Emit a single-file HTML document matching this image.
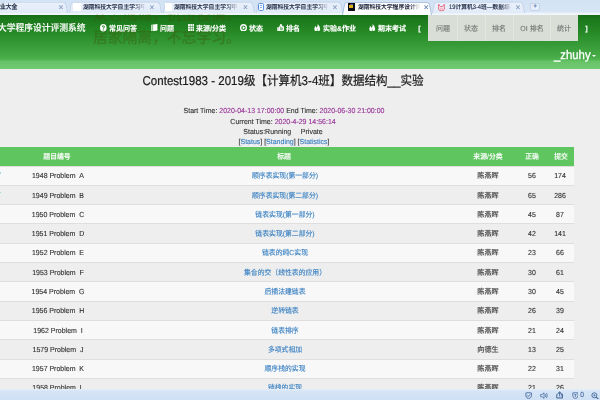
<!DOCTYPE html>
<html lang="zh-CN"><head><meta charset="utf-8"><title>Contest1983</title>
<style>
html,body{margin:0;padding:0;background:#eee;}
body{width:600px;height:400px;overflow:hidden;position:relative;font-family:"Liberation Sans","Noto Sans CJK SC",sans-serif;}
#p{position:absolute;left:0;top:0;width:600px;height:400px;overflow:hidden;filter:blur(0.35px);}
.t{position:absolute;white-space:nowrap;margin:0;padding:0;text-rendering:geometricPrecision;-webkit-text-stroke:0.12px currentColor;}
.r{position:absolute;margin:0;padding:0;}
</style></head><body><div id="p">
<div class="r" style="left:0px;top:0px;width:600px;height:14.8px;background:linear-gradient(#d3e2f4 0,#d7e5f5 78%,#edf3fb 88%,#f2f6fc 100%);"></div>
<div class="r" style="left:-20px;top:1px;width:87.5px;height:11.6px;background:linear-gradient(#e9f0fa,#e1ebf8);border:0.6px solid #c3d4ea;border-bottom:none;border-radius:3px 3px 0 0;transform:perspective(40px) rotateX(10deg);transform-origin:50% 100%;box-sizing:border-box"></div>
<div class="r" style="left:68.5px;top:1px;width:93.0px;height:11.6px;background:linear-gradient(#e9f0fa,#e1ebf8);border:0.6px solid #c3d4ea;border-bottom:none;border-radius:3px 3px 0 0;transform:perspective(40px) rotateX(10deg);transform-origin:50% 100%;box-sizing:border-box"></div>
<div class="r" style="left:162.5px;top:1px;width:92.0px;height:11.6px;background:linear-gradient(#e9f0fa,#e1ebf8);border:0.6px solid #c3d4ea;border-bottom:none;border-radius:3px 3px 0 0;transform:perspective(40px) rotateX(10deg);transform-origin:50% 100%;box-sizing:border-box"></div>
<div class="r" style="left:255.5px;top:1px;width:86.5px;height:11.6px;background:linear-gradient(#e9f0fa,#e1ebf8);border:0.6px solid #c3d4ea;border-bottom:none;border-radius:3px 3px 0 0;transform:perspective(40px) rotateX(10deg);transform-origin:50% 100%;box-sizing:border-box"></div>
<div class="r" style="left:432px;top:1px;width:93px;height:11.6px;background:linear-gradient(#e9f0fa,#e1ebf8);border:0.6px solid #c3d4ea;border-bottom:none;border-radius:3px 3px 0 0;transform:perspective(40px) rotateX(10deg);transform-origin:50% 100%;box-sizing:border-box"></div>
<div class="r" style="left:342px;top:0.6px;width:90px;height:14px;background:#fff;border:0.6px solid #a9c0de;border-bottom:none;border-radius:3px 3px 0 0;transform:perspective(40px) rotateX(10deg);transform-origin:50% 100%;box-sizing:border-box"></div>
<div class="r" style="left:530px;top:2.6px;width:10.4px;height:8.4px;background:#e6eefa;border:0.6px solid #c2d3ea;border-radius:2px;box-sizing:border-box"></div>
<div class="t" style="transform:translateX(-50%) scaleX(1);transform-origin:50% 50%;left:535.2px;top:3px;font-size:6.5px;line-height:7px;color:#5f7fb0;font-weight:bold;">+</div>
<div class="t" style="transform:scaleX(0.875);transform-origin:0 50%;left:-0.5px;top:4px;font-size:6.6px;line-height:7px;color:#1c2540;font-weight:500;">业大全</div>
<div class="t" style="transform:translateX(-50%) scaleX(1);transform-origin:50% 50%;left:61px;top:2px;font-size:8.4px;line-height:10px;color:#7f98bd;">×</div>
<div class="t" style="transform:translateX(-50%) scaleX(1);transform-origin:50% 50%;left:152px;top:2px;font-size:8.4px;line-height:10px;color:#7f98bd;">×</div>
<div class="t" style="transform:translateX(-50%) scaleX(1);transform-origin:50% 50%;left:245.5px;top:2px;font-size:8.4px;line-height:10px;color:#7f98bd;">×</div>
<div class="t" style="transform:translateX(-50%) scaleX(1);transform-origin:50% 50%;left:335px;top:2px;font-size:8.4px;line-height:10px;color:#7f98bd;">×</div>
<div class="t" style="transform:translateX(-50%) scaleX(1);transform-origin:50% 50%;left:518px;top:2px;font-size:8.4px;line-height:10px;color:#7f98bd;">×</div>
<div class="t" style="transform:translateX(-50%) scaleX(1);transform-origin:50% 50%;left:426.3px;top:2px;font-size:8.4px;line-height:10px;color:#5b7db3;">×</div>
<div class="r" style="left:73px;top:3px;width:8px;height:8px;background:#fff;"></div>
<div class="r" style="left:165px;top:3px;width:7.2px;height:8px;background:#fff;"></div>
<div class="r" style="left:257.8px;top:2.8px;width:6.4px;height:8.4px;border:1px solid #5b8fe0;border-radius:1.6px;background:#f3f7ff;box-sizing:border-box"></div>
<div class="r" style="left:259.6px;top:5.2px;width:2.8px;height:0.8px;background:#8db0ea;"></div>
<div class="r" style="left:259.6px;top:7px;width:2.8px;height:0.8px;background:#8db0ea;"></div>
<div class="r" style="left:347.5px;top:3px;width:7.2px;height:7.6px;background:#0c0c14;"></div>
<div class="r" style="left:349px;top:5.4px;width:4.2px;height:2.6px;background:#d8b020;"></div>
<div class="r" style="left:349.6px;top:4.4px;width:1.2px;height:1px;background:#c03030;"></div>
<div class="r" style="left:351.4px;top:4.4px;width:1.2px;height:1px;background:#3070d0;"></div>
<svg class="r" style="left:437.3px;top:2.6px" width="9" height="9" viewBox="0 0 18 18"><path d="M3.4 2.4 L6.4 7 L11.6 7 L14.6 2.4 L14.8 12 Q14.8 15.6 9 15.6 Q3.2 15.6 3.2 12 Z" fill="#fde8ec" stroke="#e4607a" stroke-width="1.7" stroke-linejoin="round"/><path d="M5.6 13.6 L9 10.4 L12.4 13.6" fill="none" stroke="#e4607a" stroke-width="1.4"/></svg>
<div class="t" style="transform:scaleX(0.875);transform-origin:0 50%;left:83px;top:4px;font-size:6.6px;line-height:7px;color:#1c2540;font-weight:500;width:72px;overflow:hidden;-webkit-mask-image:linear-gradient(90deg,#000 82%,transparent 99%);">湖南科技大学自主学习中心</div>
<div class="t" style="transform:scaleX(0.875);transform-origin:0 50%;left:174px;top:4px;font-size:6.6px;line-height:7px;color:#1c2540;font-weight:500;width:74px;overflow:hidden;-webkit-mask-image:linear-gradient(90deg,#000 82%,transparent 99%);">湖南科技大学自主学习中心</div>
<div class="t" style="transform:scaleX(0.875);transform-origin:0 50%;left:266px;top:4px;font-size:6.6px;line-height:7px;color:#1c2540;font-weight:500;width:72px;overflow:hidden;-webkit-mask-image:linear-gradient(90deg,#000 82%,transparent 99%);">湖南科技大学自主学习中心</div>
<div class="t" style="transform:scaleX(0.875);transform-origin:0 50%;left:357.5px;top:4px;font-size:6.6px;line-height:7px;color:#101830;font-weight:500;width:72px;overflow:hidden;-webkit-mask-image:linear-gradient(90deg,#000 82%,transparent 99%);">湖南科技大学程序设计评测</div>
<div class="t" style="transform:scaleX(0.875);transform-origin:0 50%;left:449px;top:4px;font-size:6.6px;line-height:7px;color:#1c2540;font-weight:500;width:72px;overflow:hidden;-webkit-mask-image:linear-gradient(90deg,#000 82%,transparent 99%);">19计算机3-4班—数据结构__</div>
<div class="r" style="left:0px;top:14.6px;width:600px;height:54.6px;background:linear-gradient(#176c17 0%,#1b761b 6%,#258825 30%,#369b36 55%,#4aae4a 80%,#52b552 83%,#66c266 85.5%,#6cc66c 92%,#72ca72 100%);"></div>
<div class="t" style="transform:scaleX(0.935);transform-origin:0 50%;left:93px;top:7px;font-size:15.8px;line-height:17px;color:rgb(60,88,8);font-weight:500;opacity:0.42;clip-path:inset(7.6px 0 0 0);">众志成城，抗击疫情。</div>
<div class="t" style="transform:scaleX(0.935);transform-origin:0 50%;left:93px;top:30px;font-size:15.8px;line-height:17px;color:rgb(60,88,8);font-weight:500;opacity:0.42;">居家隔离，不忘学习。</div>
<div class="t" style="transform:scaleX(0.921);transform-origin:0 50%;left:-2.1px;top:23px;font-size:9.5px;line-height:11px;color:#fff;font-weight:500;">大学程序设计评测系统</div>
<div class="t" style="transform:scaleX(0.958);transform-origin:0 50%;left:109px;top:24px;font-size:7.3px;line-height:9px;color:#fff;font-weight:bold;">常见问答</div>
<div class="t" style="transform:scaleX(0.958);transform-origin:0 50%;left:160px;top:24px;font-size:7.3px;line-height:9px;color:#fff;font-weight:bold;">问题</div>
<div class="t" style="transform:scaleX(0.958);transform-origin:0 50%;left:196px;top:24px;font-size:7.3px;line-height:9px;color:#fff;font-weight:bold;">来源/分类</div>
<div class="t" style="transform:scaleX(0.958);transform-origin:0 50%;left:249px;top:24px;font-size:7.3px;line-height:9px;color:#fff;font-weight:bold;">状态</div>
<div class="t" style="transform:scaleX(0.958);transform-origin:0 50%;left:285.7px;top:24px;font-size:7.3px;line-height:9px;color:#fff;font-weight:bold;">排名</div>
<div class="t" style="transform:scaleX(0.958);transform-origin:0 50%;left:322.7px;top:24px;font-size:7.3px;line-height:9px;color:#fff;font-weight:bold;">实验&amp;作业</div>
<div class="t" style="transform:scaleX(0.958);transform-origin:0 50%;left:377.7px;top:24px;font-size:7.3px;line-height:9px;color:#fff;font-weight:bold;">期末考试</div>
<div class="t" style="transform:translateX(-50%) scaleX(1);transform-origin:50% 50%;left:419.5px;top:24px;font-size:7.3px;line-height:9px;color:#fff;font-weight:bold;">[</div>
<div class="t" style="transform:translateX(-50%) scaleX(1);transform-origin:50% 50%;left:586.5px;top:24px;font-size:7.3px;line-height:9px;color:#fff;font-weight:bold;">]</div>
<svg class="r" style="left:100.2px;top:24px" width="6.6" height="7.6" viewBox="0 0 12 12" preserveAspectRatio="none"><circle cx="6" cy="6" r="6" fill="#fff"/><path d="M4 4.7 Q4 2.6 6 2.6 Q8 2.6 8 4.4 Q8 5.6 6 6.4 L6 7.4" stroke="#2a8a2a" stroke-width="1.6" fill="none"/><circle cx="6" cy="9.4" r="1" fill="#2a8a2a"/></svg>
<svg class="r" style="left:151px;top:24px" width="6.7" height="7.4" viewBox="0 0 12 12" preserveAspectRatio="none"><path d="M0.5 1.2 L11.5 0 L11.5 10.6 L0.5 12 Z" fill="#fff"/><path d="M2.9 1 L2.9 11.6" stroke="#49a349" stroke-width="1.1"/></svg>
<svg class="r" style="left:187.6px;top:24.4px" width="6.6" height="7.1" viewBox="0 0 12 12" preserveAspectRatio="none"><rect x="0" y="0" width="12" height="12" rx="1" fill="#fff"/><path d="M0 4.2H12M0 8H12M4.2 0V12M8 0V12" stroke="#2a8a2a" stroke-width="0.9"/></svg>
<svg class="r" style="left:239.9px;top:23.9px" width="7" height="7.6" viewBox="0 0 12 12" preserveAspectRatio="none"><circle cx="6" cy="6" r="4.8" fill="none" stroke="#fff" stroke-width="2.3"/><path d="M4.6 3.2 L9 6 L4.6 8.8 Z" fill="#fff"/></svg>
<svg class="r" style="left:276.9px;top:23.9px" width="6.9" height="7.4" viewBox="0 0 12 12" preserveAspectRatio="none"><path d="M0.4 5.4H3.2V11.4H0.4Z" fill="#fff"/><path d="M4.4 5.6 L6.6 1 Q8.8 1.2 7.8 4.6 H11 Q11.8 6.4 10.6 11 H4.4 Z" fill="rgba(255,255,255,0.45)" stroke="#fff" stroke-width="1.9" stroke-linejoin="round"/></svg>
<svg class="r" style="left:314.1px;top:23.8px" width="6.5" height="7.6" viewBox="0 0 12 12" preserveAspectRatio="none"><path d="M6.6 0 Q11 3 11.4 7.6 Q11.4 12 6 12 Q0.6 12 0.6 7.8 Q0.6 4.6 3.8 2.8 Q3.4 5.6 4.8 6 Q7.4 3.6 6.6 0 Z" fill="#fff"/><path d="M6 11.4 Q4.4 10 6 7.6 Q7.6 10 6 11.4Z" fill="#5fb25f"/></svg>
<svg class="r" style="left:369.1px;top:23.8px" width="6.5" height="7.6" viewBox="0 0 12 12" preserveAspectRatio="none"><path d="M6.6 0 Q11 3 11.4 7.6 Q11.4 12 6 12 Q0.6 12 0.6 7.8 Q0.6 4.6 3.8 2.8 Q3.4 5.6 4.8 6 Q7.4 3.6 6.6 0 Z" fill="#fff"/><path d="M6 11.4 Q4.4 10 6 7.6 Q7.6 10 6 11.4Z" fill="#5fb25f"/></svg>
<div class="r" style="left:428.4px;top:14.8px;width:149.4px;height:26px;background:#d9dfd6;"></div>
<div class="r" style="left:456.5px;top:14.8px;width:0.8px;height:26px;background:rgba(255,255,255,0.22);"></div>
<div class="r" style="left:484.6px;top:14.8px;width:0.8px;height:26px;background:rgba(255,255,255,0.22);"></div>
<div class="r" style="left:513.1px;top:14.8px;width:0.8px;height:26px;background:rgba(255,255,255,0.22);"></div>
<div class="r" style="left:549.9px;top:14.8px;width:0.8px;height:26px;background:rgba(255,255,255,0.22);"></div>
<div class="t" style="transform:translateX(-50%) scaleX(0.958);transform-origin:50% 50%;left:442.8px;top:24px;font-size:7.3px;line-height:9px;color:#777;">问题</div>
<div class="t" style="transform:translateX(-50%) scaleX(0.958);transform-origin:50% 50%;left:470.7px;top:24px;font-size:7.3px;line-height:9px;color:#777;">状态</div>
<div class="t" style="transform:translateX(-50%) scaleX(0.958);transform-origin:50% 50%;left:498.6px;top:24px;font-size:7.3px;line-height:9px;color:#777;">排名</div>
<div class="t" style="transform:translateX(-50%) scaleX(0.958);transform-origin:50% 50%;left:531.6px;top:24px;font-size:7.3px;line-height:9px;color:#777;">OI 排名</div>
<div class="t" style="transform:translateX(-50%) scaleX(0.958);transform-origin:50% 50%;left:564.3px;top:24px;font-size:7.3px;line-height:9px;color:#777;">统计</div>
<div class="t" style="transform:scaleX(0.9);transform-origin:0 50%;left:553.5px;top:48px;font-size:12.6px;line-height:14px;color:#fff;-webkit-text-stroke:0.3px #fff;">_zhuhy</div>
<div class="r" style="left:591.5px;top:55.2px;width:0;height:0;border-left:2.1px solid transparent;border-right:2.1px solid transparent;border-top:2.5px solid #fff"></div>
<div class="r" style="left:0px;top:69.2px;width:600px;height:331px;background:#eeeeee;"></div>
<div class="t" style="transform:translateX(-50%) scaleX(0.902);transform-origin:50% 50%;left:283.4px;top:73px;font-size:12.8px;line-height:15px;color:#1c1c1c;-webkit-text-stroke:0.22px #1c1c1c;">Contest1983 - 2019级【计算机3-4班】数据结构__实验</div>
<div class="t" style="transform:translateX(-50%) scaleX(0.958);transform-origin:50% 50%;left:283.5px;top:106px;font-size:7.3px;line-height:9px;color:#333;">Start Time: <span style="color:#993399">2020-04-13 17:00:00</span> End Time: <span style="color:#993399">2020-06-30 21:00:00</span></div>
<div class="t" style="transform:translateX(-50%) scaleX(0.958);transform-origin:50% 50%;left:282.5px;top:117px;font-size:7.3px;line-height:9px;color:#333;">Current Time: <span style="color:#993399">2020-4-29 14:56:14</span></div>
<div class="t" style="transform:translateX(-50%) scaleX(0.958);transform-origin:50% 50%;left:283.2px;top:127px;font-size:7.3px;line-height:9px;color:#333;">Status:Running&nbsp;&nbsp;&nbsp;&nbsp;&nbsp;Private</div>
<div class="t" style="transform:translateX(-50%) scaleX(0.958);transform-origin:50% 50%;left:284px;top:137px;font-size:7.3px;line-height:9px;color:#333;">[<span style="color:#3a80c2">Status</span>] [<span style="color:#3a80c2">Standing</span>] [<span style="color:#3a80c2">Statistics</span>]</div>
<div class="r" style="left:-7px;top:147.2px;width:581.3px;height:18.4px;background:#5fc55f;"></div>
<div class="t" style="transform:translateX(-50%) scaleX(0.937);transform-origin:50% 50%;left:57px;top:152px;font-size:7.3px;line-height:9px;color:#fff;font-weight:500;">题目编号</div>
<div class="t" style="transform:translateX(-50%) scaleX(0.937);transform-origin:50% 50%;left:284px;top:152px;font-size:7.3px;line-height:9px;color:#fff;font-weight:500;">标题</div>
<div class="t" style="transform:translateX(-50%) scaleX(0.937);transform-origin:50% 50%;left:488.4px;top:152px;font-size:7.3px;line-height:9px;color:#fff;font-weight:500;">来源/分类</div>
<div class="t" style="transform:translateX(-50%) scaleX(0.937);transform-origin:50% 50%;left:531.9px;top:152px;font-size:7.3px;line-height:9px;color:#fff;font-weight:500;">正确</div>
<div class="t" style="transform:translateX(-50%) scaleX(0.937);transform-origin:50% 50%;left:560.6px;top:152px;font-size:7.3px;line-height:9px;color:#fff;font-weight:500;">提交</div>
<div class="r" style="left:-7px;top:165.5px;width:581.3px;height:19.3px;background:#f8f8f8;border-top:0.6px solid #dedede;box-sizing:border-box"></div>
<div class="t" style="transform:translateX(-50%) scaleX(0.958);transform-origin:50% 50%;left:57.5px;top:171px;font-size:7.3px;line-height:9px;color:#333;">1948 Problem &nbsp;A</div>
<div class="t" style="transform:translateX(-50%) scaleX(0.937);transform-origin:50% 50%;left:284.8px;top:171px;font-size:7.3px;line-height:9px;color:#3a80c2;">顺序表实现(第一部分)</div>
<div class="t" style="transform:translateX(-50%) scaleX(0.975);transform-origin:50% 50%;left:488.4px;top:171px;font-size:7.3px;line-height:9px;color:#333;">陈燕晖</div>
<div class="t" style="transform:translateX(-50%) scaleX(0.958);transform-origin:50% 50%;left:531.8px;top:171px;font-size:7.3px;line-height:9px;color:#333;">56</div>
<div class="t" style="transform:translateX(-50%) scaleX(0.958);transform-origin:50% 50%;left:560.3px;top:171px;font-size:7.3px;line-height:9px;color:#333;">174</div>
<div class="r" style="left:-7px;top:184.8px;width:581.3px;height:19.3px;background:#eeeeee;border-top:0.6px solid #dedede;box-sizing:border-box"></div>
<div class="t" style="transform:translateX(-50%) scaleX(0.958);transform-origin:50% 50%;left:57.5px;top:191px;font-size:7.3px;line-height:9px;color:#333;">1949 Problem &nbsp;B</div>
<div class="t" style="transform:translateX(-50%) scaleX(0.937);transform-origin:50% 50%;left:284.8px;top:191px;font-size:7.3px;line-height:9px;color:#3a80c2;">顺序表实现(第二部分)</div>
<div class="t" style="transform:translateX(-50%) scaleX(0.975);transform-origin:50% 50%;left:488.4px;top:191px;font-size:7.3px;line-height:9px;color:#333;">陈燕晖</div>
<div class="t" style="transform:translateX(-50%) scaleX(0.958);transform-origin:50% 50%;left:531.8px;top:191px;font-size:7.3px;line-height:9px;color:#333;">65</div>
<div class="t" style="transform:translateX(-50%) scaleX(0.958);transform-origin:50% 50%;left:560.3px;top:191px;font-size:7.3px;line-height:9px;color:#333;">286</div>
<div class="r" style="left:-7px;top:204.1px;width:581.3px;height:19.3px;background:#f8f8f8;border-top:0.6px solid #dedede;box-sizing:border-box"></div>
<div class="t" style="transform:translateX(-50%) scaleX(0.958);transform-origin:50% 50%;left:57.5px;top:210px;font-size:7.3px;line-height:9px;color:#333;">1950 Problem &nbsp;C</div>
<div class="t" style="transform:translateX(-50%) scaleX(0.937);transform-origin:50% 50%;left:284.8px;top:210px;font-size:7.3px;line-height:9px;color:#3a80c2;">链表实现(第一部分)</div>
<div class="t" style="transform:translateX(-50%) scaleX(0.975);transform-origin:50% 50%;left:488.4px;top:210px;font-size:7.3px;line-height:9px;color:#333;">陈燕晖</div>
<div class="t" style="transform:translateX(-50%) scaleX(0.958);transform-origin:50% 50%;left:531.8px;top:210px;font-size:7.3px;line-height:9px;color:#333;">45</div>
<div class="t" style="transform:translateX(-50%) scaleX(0.958);transform-origin:50% 50%;left:560.3px;top:210px;font-size:7.3px;line-height:9px;color:#333;">87</div>
<div class="r" style="left:-7px;top:223.4px;width:581.3px;height:19.3px;background:#eeeeee;border-top:0.6px solid #dedede;box-sizing:border-box"></div>
<div class="t" style="transform:translateX(-50%) scaleX(0.958);transform-origin:50% 50%;left:57.5px;top:229px;font-size:7.3px;line-height:9px;color:#333;">1951 Problem &nbsp;D</div>
<div class="t" style="transform:translateX(-50%) scaleX(0.937);transform-origin:50% 50%;left:284.8px;top:229px;font-size:7.3px;line-height:9px;color:#3a80c2;">链表实现(第二部分)</div>
<div class="t" style="transform:translateX(-50%) scaleX(0.975);transform-origin:50% 50%;left:488.4px;top:229px;font-size:7.3px;line-height:9px;color:#333;">陈燕晖</div>
<div class="t" style="transform:translateX(-50%) scaleX(0.958);transform-origin:50% 50%;left:531.8px;top:229px;font-size:7.3px;line-height:9px;color:#333;">42</div>
<div class="t" style="transform:translateX(-50%) scaleX(0.958);transform-origin:50% 50%;left:560.3px;top:229px;font-size:7.3px;line-height:9px;color:#333;">141</div>
<div class="r" style="left:-7px;top:242.7px;width:581.3px;height:19.3px;background:#f8f8f8;border-top:0.6px solid #dedede;box-sizing:border-box"></div>
<div class="t" style="transform:translateX(-50%) scaleX(0.958);transform-origin:50% 50%;left:57.5px;top:248px;font-size:7.3px;line-height:9px;color:#333;">1952 Problem &nbsp;E</div>
<div class="t" style="transform:translateX(-50%) scaleX(0.937);transform-origin:50% 50%;left:284.8px;top:248px;font-size:7.3px;line-height:9px;color:#3a80c2;">链表的纯C实现</div>
<div class="t" style="transform:translateX(-50%) scaleX(0.975);transform-origin:50% 50%;left:488.4px;top:248px;font-size:7.3px;line-height:9px;color:#333;">陈燕晖</div>
<div class="t" style="transform:translateX(-50%) scaleX(0.958);transform-origin:50% 50%;left:531.8px;top:248px;font-size:7.3px;line-height:9px;color:#333;">23</div>
<div class="t" style="transform:translateX(-50%) scaleX(0.958);transform-origin:50% 50%;left:560.3px;top:248px;font-size:7.3px;line-height:9px;color:#333;">66</div>
<div class="r" style="left:-7px;top:262.0px;width:581.3px;height:19.3px;background:#eeeeee;border-top:0.6px solid #dedede;box-sizing:border-box"></div>
<div class="t" style="transform:translateX(-50%) scaleX(0.958);transform-origin:50% 50%;left:57.5px;top:268px;font-size:7.3px;line-height:9px;color:#333;">1953 Problem &nbsp;F</div>
<div class="t" style="transform:translateX(-50%) scaleX(0.937);transform-origin:50% 50%;left:284.8px;top:268px;font-size:7.3px;line-height:9px;color:#3a80c2;">集合的交（线性表的应用）</div>
<div class="t" style="transform:translateX(-50%) scaleX(0.975);transform-origin:50% 50%;left:488.4px;top:268px;font-size:7.3px;line-height:9px;color:#333;">陈燕晖</div>
<div class="t" style="transform:translateX(-50%) scaleX(0.958);transform-origin:50% 50%;left:531.8px;top:268px;font-size:7.3px;line-height:9px;color:#333;">30</div>
<div class="t" style="transform:translateX(-50%) scaleX(0.958);transform-origin:50% 50%;left:560.3px;top:268px;font-size:7.3px;line-height:9px;color:#333;">61</div>
<div class="r" style="left:-7px;top:281.3px;width:581.3px;height:19.3px;background:#f8f8f8;border-top:0.6px solid #dedede;box-sizing:border-box"></div>
<div class="t" style="transform:translateX(-50%) scaleX(0.958);transform-origin:50% 50%;left:57.5px;top:287px;font-size:7.3px;line-height:9px;color:#333;">1954 Problem &nbsp;G</div>
<div class="t" style="transform:translateX(-50%) scaleX(0.937);transform-origin:50% 50%;left:284.8px;top:287px;font-size:7.3px;line-height:9px;color:#3a80c2;">后插法建链表</div>
<div class="t" style="transform:translateX(-50%) scaleX(0.975);transform-origin:50% 50%;left:488.4px;top:287px;font-size:7.3px;line-height:9px;color:#333;">陈燕晖</div>
<div class="t" style="transform:translateX(-50%) scaleX(0.958);transform-origin:50% 50%;left:531.8px;top:287px;font-size:7.3px;line-height:9px;color:#333;">30</div>
<div class="t" style="transform:translateX(-50%) scaleX(0.958);transform-origin:50% 50%;left:560.3px;top:287px;font-size:7.3px;line-height:9px;color:#333;">45</div>
<div class="r" style="left:-7px;top:300.6px;width:581.3px;height:19.3px;background:#eeeeee;border-top:0.6px solid #dedede;box-sizing:border-box"></div>
<div class="t" style="transform:translateX(-50%) scaleX(0.958);transform-origin:50% 50%;left:57.5px;top:306px;font-size:7.3px;line-height:9px;color:#333;">1956 Problem &nbsp;H</div>
<div class="t" style="transform:translateX(-50%) scaleX(0.937);transform-origin:50% 50%;left:284.8px;top:306px;font-size:7.3px;line-height:9px;color:#3a80c2;">逆转链表</div>
<div class="t" style="transform:translateX(-50%) scaleX(0.975);transform-origin:50% 50%;left:488.4px;top:306px;font-size:7.3px;line-height:9px;color:#333;">陈燕晖</div>
<div class="t" style="transform:translateX(-50%) scaleX(0.958);transform-origin:50% 50%;left:531.8px;top:306px;font-size:7.3px;line-height:9px;color:#333;">26</div>
<div class="t" style="transform:translateX(-50%) scaleX(0.958);transform-origin:50% 50%;left:560.3px;top:306px;font-size:7.3px;line-height:9px;color:#333;">39</div>
<div class="r" style="left:-7px;top:319.9px;width:581.3px;height:19.3px;background:#f8f8f8;border-top:0.6px solid #dedede;box-sizing:border-box"></div>
<div class="t" style="transform:translateX(-50%) scaleX(0.958);transform-origin:50% 50%;left:57.5px;top:326px;font-size:7.3px;line-height:9px;color:#333;">1962 Problem &nbsp;I</div>
<div class="t" style="transform:translateX(-50%) scaleX(0.937);transform-origin:50% 50%;left:284.8px;top:326px;font-size:7.3px;line-height:9px;color:#3a80c2;">链表排序</div>
<div class="t" style="transform:translateX(-50%) scaleX(0.975);transform-origin:50% 50%;left:488.4px;top:326px;font-size:7.3px;line-height:9px;color:#333;">陈燕晖</div>
<div class="t" style="transform:translateX(-50%) scaleX(0.958);transform-origin:50% 50%;left:531.8px;top:326px;font-size:7.3px;line-height:9px;color:#333;">21</div>
<div class="t" style="transform:translateX(-50%) scaleX(0.958);transform-origin:50% 50%;left:560.3px;top:326px;font-size:7.3px;line-height:9px;color:#333;">24</div>
<div class="r" style="left:-7px;top:339.20000000000005px;width:581.3px;height:19.3px;background:#eeeeee;border-top:0.6px solid #dedede;box-sizing:border-box"></div>
<div class="t" style="transform:translateX(-50%) scaleX(0.958);transform-origin:50% 50%;left:57.5px;top:345px;font-size:7.3px;line-height:9px;color:#333;">1579 Problem &nbsp;J</div>
<div class="t" style="transform:translateX(-50%) scaleX(0.937);transform-origin:50% 50%;left:284.8px;top:345px;font-size:7.3px;line-height:9px;color:#3a80c2;">多项式相加</div>
<div class="t" style="transform:translateX(-50%) scaleX(0.975);transform-origin:50% 50%;left:488.4px;top:345px;font-size:7.3px;line-height:9px;color:#333;">向德生</div>
<div class="t" style="transform:translateX(-50%) scaleX(0.958);transform-origin:50% 50%;left:531.8px;top:345px;font-size:7.3px;line-height:9px;color:#333;">13</div>
<div class="t" style="transform:translateX(-50%) scaleX(0.958);transform-origin:50% 50%;left:560.3px;top:345px;font-size:7.3px;line-height:9px;color:#333;">25</div>
<div class="r" style="left:-7px;top:358.5px;width:581.3px;height:19.3px;background:#f8f8f8;border-top:0.6px solid #dedede;box-sizing:border-box"></div>
<div class="t" style="transform:translateX(-50%) scaleX(0.958);transform-origin:50% 50%;left:57.5px;top:364px;font-size:7.3px;line-height:9px;color:#333;">1957 Problem &nbsp;K</div>
<div class="t" style="transform:translateX(-50%) scaleX(0.937);transform-origin:50% 50%;left:284.8px;top:364px;font-size:7.3px;line-height:9px;color:#3a80c2;">顺序栈的实现</div>
<div class="t" style="transform:translateX(-50%) scaleX(0.975);transform-origin:50% 50%;left:488.4px;top:364px;font-size:7.3px;line-height:9px;color:#333;">陈燕晖</div>
<div class="t" style="transform:translateX(-50%) scaleX(0.958);transform-origin:50% 50%;left:531.8px;top:364px;font-size:7.3px;line-height:9px;color:#333;">22</div>
<div class="t" style="transform:translateX(-50%) scaleX(0.958);transform-origin:50% 50%;left:560.3px;top:364px;font-size:7.3px;line-height:9px;color:#333;">31</div>
<div class="r" style="left:-7px;top:377.8px;width:581.3px;height:19.3px;background:#eeeeee;border-top:0.6px solid #dedede;box-sizing:border-box"></div>
<div class="t" style="transform:translateX(-50%) scaleX(0.958);transform-origin:50% 50%;left:57.5px;top:383px;font-size:7.3px;line-height:9px;color:#333;">1958 Problem &nbsp;L</div>
<div class="t" style="transform:translateX(-50%) scaleX(0.937);transform-origin:50% 50%;left:284.8px;top:383px;font-size:7.3px;line-height:9px;color:#3a80c2;">链栈的实现</div>
<div class="t" style="transform:translateX(-50%) scaleX(0.975);transform-origin:50% 50%;left:488.4px;top:383px;font-size:7.3px;line-height:9px;color:#333;">陈燕晖</div>
<div class="t" style="transform:translateX(-50%) scaleX(0.958);transform-origin:50% 50%;left:531.8px;top:383px;font-size:7.3px;line-height:9px;color:#333;">21</div>
<div class="t" style="transform:translateX(-50%) scaleX(0.958);transform-origin:50% 50%;left:560.3px;top:383px;font-size:7.3px;line-height:9px;color:#333;">26</div>
<div class="r" style="left:-1px;top:171.8px;width:2.2px;height:2px;background:rgba(110,200,215,0.6);"></div>
<div class="r" style="left:-1px;top:191.6px;width:2.2px;height:1.8px;background:rgba(110,200,215,0.6);"></div>
<div class="r" style="left:0px;top:389.3px;width:600px;height:10.7px;background:linear-gradient(#e6f0fb 0,#d6e5f6 18%,#cfe0f4 100%);"></div>
<svg class="r" style="left:524.8px;top:391.6px" width="7.3" height="7.2" viewBox="0 0 12 12" preserveAspectRatio="none"><path d="M1.4 1.6 Q6 0.6 10.6 1.6 V6.4 Q10.4 9.4 6 11.4 Q1.6 9.4 1.4 6.4 Z" fill="none" stroke="#4a6c9e" stroke-width="1.5"/><path d="M3.6 5.6 L5.4 7.6 L8.6 3.8" fill="none" stroke="#4a6c9e" stroke-width="1.5"/></svg>
<svg class="r" style="left:539.8px;top:391.6px" width="8.2" height="7.2" viewBox="0 0 13 12" preserveAspectRatio="none"><path d="M1 4.2H3.2L6.4 1.4V10.6L3.2 7.8H1Z" fill="#dbe8f7" stroke="#4a6c9e" stroke-width="1.3" stroke-linejoin="round"/><path d="M8.4 3.6Q10 6 8.4 8.4M10.2 1.8Q13 6 10.2 10.2" fill="none" stroke="#4a6c9e" stroke-width="1.3"/></svg>
<svg class="r" style="left:555.7px;top:391.2px" width="7.3" height="7.6" viewBox="0 0 12 12" preserveAspectRatio="none"><path d="M1.2 11 V6.4 Q1.2 4.6 3 4.6 M9 4.6 Q10.8 4.6 10.8 6.4 V11 Z" fill="none" stroke="#4a6c9e" stroke-width="1.6"/><path d="M1.2 11H10.8" stroke="#4a6c9e" stroke-width="1.8"/><path d="M6 8.6V1.8M3.4 4L6 1.4L8.6 4" fill="none" stroke="#4a6c9e" stroke-width="1.6"/></svg>
<svg class="r" style="left:571.5px;top:391.6px" width="6.8" height="7.2" viewBox="0 0 12 12" preserveAspectRatio="none"><path d="M1.4 1.6 Q6 0.6 10.6 1.6 V6.4 Q10.4 9.4 6 11.4 Q1.6 9.4 1.4 6.4 Z" fill="none" stroke="#4a6c9e" stroke-width="1.5"/><path d="M4 4.2H8M6 4.2V8.6" stroke="#4a6c9e" stroke-width="1.3"/></svg>
<div class="t" style="transform:translateX(-50%) scaleX(0.9);transform-origin:50% 50%;left:581.7px;top:390px;font-size:7.4px;line-height:9px;color:#4a6c9e;">0</div>
<svg class="r" style="left:590.8px;top:391.6px" width="7.8" height="7.6" viewBox="0 0 12 12" preserveAspectRatio="none"><circle cx="5.2" cy="5.2" r="3.9" fill="none" stroke="#4a6c9e" stroke-width="1.5"/><path d="M8 8L11.4 11.4" stroke="#4a6c9e" stroke-width="1.8"/><path d="M3.4 5.2H7M5.2 3.4V7" stroke="#4a6c9e" stroke-width="1.1"/></svg>
</div></body></html>
